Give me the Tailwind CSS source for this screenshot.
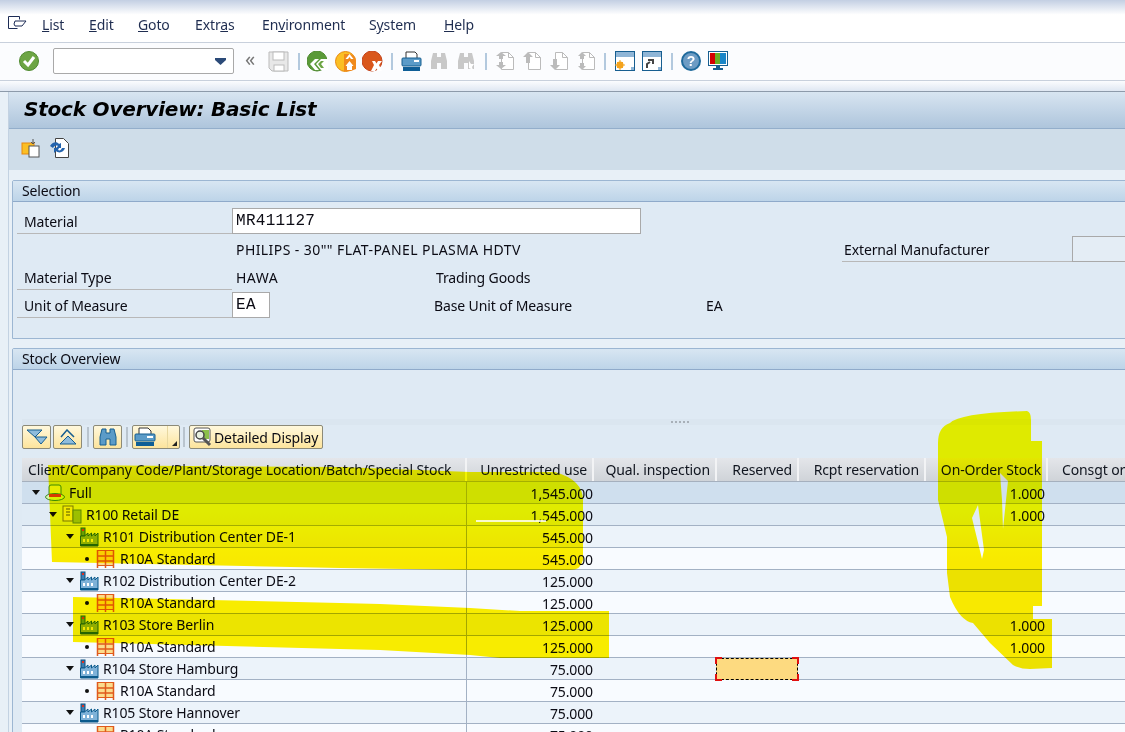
<!DOCTYPE html>
<html lang="en">
<head>
    <meta charset="UTF-8">
    <title>Stock Overview: Basic List</title>
    <script src="https://cdn.jsdelivr.net/npm/@tailwindcss/browser@4"></script>
</head>
<body class="bg-white">
<svg class="hidden">
    <symbol id="plant-blue" viewBox="0 0 20 20">
        <rect x="2" y="1" width="4" height="8" fill="#3d7fb0" stroke="#0b4f7f"/>
        <rect x="3" y="2" width="2" height="2" fill="#e03020"/>
        <path d="M1.5 19V9h4l3.500-3v3l3.500-3v3l3.500-3v3l3-3v13z" fill="#7fb2d8" stroke="#0b5a8c"/>
        <path d="M4 12h2v3H4zM8 12h2v3H8zM12 12h2v3h-2z" fill="#fff"/>
        <rect x="1" y="17" width="18" height="2" fill="#0b5a8c"/>
    </symbol>
    <symbol id="plant-green" viewBox="0 0 20 20">
        <rect x="2" y="1" width="4" height="8" fill="#6aa520" stroke="#2a6a10"/>
        <rect x="3" y="2" width="2" height="2" fill="#e03020"/>
        <path d="M1.5 19V9h4l3.500-3v3l3.500-3v3l3.500-3v3l3-3v13z" fill="#90b820" stroke="#256a10"/>
        <path d="M4 12h2v3H4zM8 12h2v3H8zM12 12h2v3h-2z" fill="#f4f4c0"/>
        <rect x="1" y="17" width="18" height="2" fill="#256a10"/>
    </symbol>
    <symbol id="shelf" viewBox="0 0 20 20">
        <rect x="1.500" y="1.500" width="16" height="15" fill="#fbdc8c" stroke="#e05a1c"/>
        <path d="M1.500 7h16M1.500 12h16M9.500 1.500V19M1.500 1v18M17.500 1v18" fill="none" stroke="#e05a1c" stroke-width="1.500"/>
    </symbol>
    <symbol id="tri-down" viewBox="0 0 8 5"><path d="M0 0h8L4 5z" fill="#111"/></symbol>
    <symbol id="binoc" viewBox="0 0 20 20">
        <path d="M4 2h4v4h4V2h4l2 8v8h-6v-6H8v6H2v-8z" fill="currentColor"/>
    </symbol>
    <symbol id="page" viewBox="0 0 20 20">
        <path d="M6.500 1.500h7l5 5v12h-12z" fill="#fff" stroke="#bbb"/>
        <path d="M13.500 1.500v5h5" fill="none" stroke="#bbb"/>
    </symbol>
</svg>

<div class="relative w-[1125px] h-[732px] overflow-hidden text-[14px] tracking-[-.12px] text-[#0b0b14] [font-family:'Noto_Sans',sans-serif] bg-[#e8f0f7]">

    <!-- menu bar -->
    <div class="h-[43px] flex items-end pb-[7px] pl-[8px] border-b border-[#c8d0dc] bg-linear-to-b from-[#c3cfe3] via-white via-35% to-white text-[#1f2d50]">
        <svg class="w-[19px] h-[14px] mb-[5px] mr-[15px]" viewBox="0 0 19 14" fill="none" stroke="#1c2b55"><path d="M.5.5h11v3M.5.5v12h9M18 5H7l-1 3 1 2h7z"/></svg>
        <span class="w-[47px]"><u>L</u>ist</span>
        <span class="w-[49px]"><u>E</u>dit</span>
        <span class="w-[57px]"><u>G</u>oto</span>
        <span class="w-[67px]">Extr<u>a</u>s</span>
        <span class="w-[107px]">En<u>v</u>ironment</span>
        <span class="w-[75px]">S<u>y</u>stem</span>
        <span><u>H</u>elp</span>
    </div>

    <!-- system toolbar -->
    <div class="h-[38px] pb-[1px] flex items-center pl-[19px] bg-[#fbfcfe] border-b border-[#c8d0dc]">
        <svg class="w-[20px] h-[20px]" viewBox="0 0 20 20"><circle cx="10" cy="10" r="9.500" fill="#6da544" stroke="#4f8a30"/><path d="M5 10l4 4 6-8" fill="none" stroke="#fff" stroke-width="3"/></svg>
        <div class="ml-[14px] w-[181px] h-[26px] bg-white border border-[#a9a9a9] rounded-[2px] flex items-center justify-end pr-[7px]">
            <svg class="w-[11px] h-[7px]" viewBox="0 0 11 7"><path d="M0 0h11v2L5.500 7 0 2z" fill="#2b4a78"/></svg>
        </div>
        <span class="ml-[11px] w-[12px] text-[20px] leading-none text-[#777] -mt-[5px]">«</span>
        <svg class="ml-[11px] w-[21px] h-[21px]" viewBox="0 0 21 21"><path d="M1 1h19v19H4l-3-3z" fill="#e8e8e8" stroke="#bbb"/><rect x="5" y="1" width="11" height="8" fill="#fff" stroke="#bbb"/><rect x="6" y="14" width="10" height="6" fill="#fff" stroke="#bbb"/></svg>
        <div class="ml-[9px] w-[2px] h-[17px] bg-[#b3c9de]"></div>
        <svg class="ml-[7px] w-[21px] h-[21px]" viewBox="0 0 21 21"><circle cx="10" cy="10" r="10" fill="#5a9a38" stroke="#4f8a30"/><path d="M8 8l-5 5 5 6h4l-5-6 5-5zM14 8l-5 5 5 6h7v-11z" fill="#fff"/><path d="M14 10l-3 3 3 4h3l-3-4 3-3z" fill="#6da544"/></svg>
        <svg class="ml-[7px] w-[21px] h-[21px]" viewBox="0 0 21 21"><circle cx="10.500" cy="10.500" r="10" fill="#fbbf24" stroke="#e8870c"/><path d="M9 3h5q7 1 7 7v8l-5 2H9z" fill="#f08a1c"/><path d="M14.500 3l-4 5h2.500l1.500-2 1.500 2h2.500zM14.500 10l-4 5h8z" fill="#fff"/><rect x="12" y="15" width="5" height="4" fill="#fff"/></svg>
        <svg class="ml-[6px] w-[21px] h-[21px]" viewBox="0 0 21 21"><circle cx="10" cy="10" r="10" fill="#d9571c" stroke="#c4431a"/><path d="M10 10h3l1.500 2.500L16 10h4l-3 4 3 6h-4l-1.500-2.500L13 20H9l3-6z" fill="#fff"/></svg>
        <div class="ml-[8px] w-[2px] h-[17px] bg-[#b3c9de]"></div>
        <svg class="ml-[8px] w-[21px] h-[21px]" viewBox="0 0 21 21"><path d="M5 7V1h9l2 2v4" fill="#fff" stroke="#333"/><rect x="1" y="7" width="19" height="8" rx="1" fill="#5b9bc8" stroke="#175e90"/><rect x="13" y="9" width="5" height="2" fill="#fff"/><rect x="2" y="16" width="17" height="4" fill="#0f5e96"/></svg>
        <svg class="ml-[7px] w-[20px] h-[20px] text-[#c8c8c8]"><use href="#binoc"/></svg>
        <svg class="ml-[7px] w-[20px] h-[20px] text-[#c8c8c8]" viewBox="0 0 20 20"><use href="#binoc"/><path d="M13 10l2 3 3 0-2 3 1 3-4-2z" fill="#fff"/></svg>
        <div class="ml-[9px] w-[2px] h-[17px] bg-[#b3c9de]"></div>
        <svg class="ml-[8px] w-[20px] h-[20px]" viewBox="0 0 20 20"><use href="#page"/><path d="M6 1L1 5h3v3h4V5h3zM6 18l5-4H8v-3H4v3H1z" fill="#bbb"/></svg>
        <svg class="ml-[7px] w-[20px] h-[20px]" viewBox="0 0 20 20"><use href="#page"/><path d="M6 1L1 6h3v6h4V6h3z" fill="#bbb"/></svg>
        <svg class="ml-[7px] w-[20px] h-[20px]" viewBox="0 0 20 20"><use href="#page"/><path d="M6 19l-5-5h3V8h4v6h3z" fill="#bbb"/></svg>
        <svg class="ml-[7px] w-[20px] h-[20px]" viewBox="0 0 20 20"><use href="#page"/><path d="M6 1L2 5h2v3h4V5h2zM6 19l-4-4h2v-3h4v3h2z" fill="#bbb"/></svg>
        <div class="ml-[8px] w-[2px] h-[17px] bg-[#b3c9de]"></div>
        <svg class="ml-[9px] w-[20px] h-[20px]" viewBox="0 0 20 20"><rect x=".5" y=".5" width="19" height="19" fill="#fff" stroke="#175e90"/><rect x="1" y="1" width="18" height="5" fill="#8fb5d6"/><circle cx="5" cy="14" r="3.500" fill="#f4a31c"/><path d="M5 9v10M0 14h10M2 11l6 6M8 11l-6 6" stroke="#f4a31c"/><rect x="16" y="16" width="3" height="3" fill="#8fb5d6"/></svg>
        <svg class="ml-[7px] w-[20px] h-[20px]" viewBox="0 0 20 20"><rect x=".5" y=".5" width="19" height="19" fill="#fff" stroke="#175e90"/><rect x="1" y="1" width="18" height="5" fill="#8fb5d6"/><path d="M5 17v-4l3-2M6 9h5v4" fill="none" stroke="#444" stroke-width="2"/><rect x="16" y="16" width="3" height="3" fill="#8fb5d6"/></svg>
        <div class="ml-[9px] w-[2px] h-[17px] bg-[#b3c9de]"></div>
        <svg class="ml-[8px] w-[20px] h-[20px]" viewBox="0 0 20 20"><circle cx="10" cy="10" r="9" fill="#6d9cc4" stroke="#1f6a9c" stroke-width="2"/><text x="10" y="15" text-anchor="middle" font-size="14" font-weight="700" font-family="Liberation Sans" fill="#fff">?</text></svg>
        <svg class="ml-[7px] w-[20px] h-[20px]" viewBox="0 0 20 20"><rect x=".5" y=".5" width="19" height="14" fill="#fff" stroke="#175e90"/><rect x="2" y="2" width="5" height="11" fill="#d40000"/><rect x="7" y="2" width="5" height="11" fill="#6ab023"/><rect x="12" y="2" width="6" height="11" fill="#1a86c8"/><path d="M8 15h4v2h3v2H5v-2h3z" fill="#175e90"/></svg>
    </div>

    <div class="h-[11px] bg-linear-to-b from-[#fbfcfe] to-[#dfe7f2] border-b border-[#8d9aaa]"></div>

    <!-- left strip + application area -->
    <div class="ml-[8px] border-l border-[#c3d2e2]">
        <div class="h-[37px] pl-[15px] pb-[3px] flex items-center border-b border-[#93aecb] bg-linear-to-b from-[#d8e5f1] to-[#aec5dc]">
            <h1 class="text-[20px] font-bold italic text-black [font-family:'DejaVu_Sans',sans-serif] tracking-[-.2px]">Stock Overview: Basic List</h1>
        </div>
        <div class="h-[41px] pl-[12px] flex items-center gap-[8px] bg-[#cfdde9]">
            <svg class="w-[20px] h-[20px] -mt-[3px]" viewBox="0 0 20 20"><rect x="1" y="5" width="12" height="11" fill="#fbbf24" stroke="#e8870c"/><rect x="8" y="8" width="10" height="11" fill="#fff" stroke="#555"/><path d="M12 1v5M10 4l2 2 2-2" fill="none" stroke="#555"/></svg>
            <svg class="w-[20px] h-[20px] -mt-[3px]" viewBox="0 0 20 20"><path d="M6.500.5h8l5 5v14h-13z" fill="#fff" stroke="#444"/><path d="M1 8c2-4 7-5 9-2l2-1v5H7l2-2c-2-1-4 0-5 2zM16 10c-1 4-6 6-9 3l-2 2v-5h5l-1 2c2 1 3 0 4-2z" fill="#2363ad"/></svg>
        </div>

        <div class="pt-[10px] pl-[3px]">
            <!-- selection panel -->
            <section class="h-[159px] w-[1200px] border border-[#9cb6d2] bg-[#dfeaf4] rounded-tl-[2px]">
                <div class="h-[21px] leading-[19px] pl-[9px] border-b border-[#8faaca] bg-linear-to-b from-[#d8e6f2] to-[#bdd4e8]">Selection</div>
                <div class="pl-[4px]">
                    <div class="h-[28px] pt-[6px] flex">
                        <label class="w-[215px] h-[26px] pl-[7px] leading-[27px] border-b border-[#b8b8b8]">Material</label>
                        <div class="w-[409px] h-[26px] bg-white border border-[#a9a9a9] pl-[3px] leading-[24px] text-[16px] tracking-[.3px] [font-family:'Liberation_Mono',monospace]">MR411127</div>
                    </div>
                    <div class="h-[28px] mt-[6px] flex">
                        <span class="w-[219px]"></span>
                        <span class="w-[606px] leading-[27px] tracking-[.42px]">PHILIPS - 30"" FLAT-PANEL PLASMA HDTV</span>
                        <span class="w-[230px] h-[26px] pl-[2px] leading-[27px] border-b border-[#b8b8b8]">External Manufacturer</span>
                        <div class="w-[80px] h-[26px] bg-[#e4edf5] border border-[#a9a9a9]"></div>
                    </div>
                    <div class="h-[28px] flex">
                        <label class="w-[215px] h-[26px] pl-[7px] leading-[27px] border-b border-[#b8b8b8]">Material Type</label>
                        <span class="w-[204px] pl-[4px] leading-[27px] tracking-[.5px]">HAWA</span>
                        <span class="leading-[27px]">Trading Goods</span>
                    </div>
                    <div class="h-[28px] flex">
                        <label class="w-[215px] h-[26px] pl-[7px] leading-[27px] border-b border-[#b8b8b8]">Unit of Measure</label>
                        <div class="w-[38px] h-[26px] bg-white border border-[#a9a9a9] pl-[3px] leading-[24px] text-[16px] tracking-[.3px] [font-family:'Liberation_Mono',monospace]">EA</div>
                        <span class="ml-[164px] w-[272px] leading-[27px]">Base Unit of Measure</span>
                        <span class="leading-[27px]">EA</span>
                    </div>
                </div>
            </section>

            <!-- stock overview panel -->
            <section class="mt-[9px] w-[1200px] h-[400px] border border-[#9cb6d2] bg-[#dfeaf4] rounded-tl-[2px]">
                <div class="h-[21px] leading-[19px] pl-[9px] border-b border-[#8faaca] bg-linear-to-b from-[#d8e6f2] to-[#bdd4e8]">Stock Overview</div>

                <div class="mt-[49px] ml-[9px] h-[6px] bg-[#dbe6f0] flex justify-center">
                    <span class="ml-[126px] mt-[2px] w-[18px] h-[2px] border-t-2 border-dotted border-[#a8b0b8]"></span>
                </div>

                <!-- tree toolbar -->
                <div class="ml-[9px] h-[24px] flex items-center">
                    <button class="w-[29px] h-[24px] rounded-[2px] border border-[#8c8a78] bg-linear-to-b from-[#fff8dc] to-[#fde49c] flex items-center justify-center">
                        <svg class="w-[22px] h-[16px]" viewBox="0 0 22 16"><path d="M1 1h15l-7 7z" fill="#8fbcdc" stroke="#175e90"/><path d="M9 8h12l-6 7z" fill="#8fbcdc" stroke="#175e90"/></svg>
                    </button>
                    <button class="ml-[2px] w-[29px] h-[24px] rounded-[2px] border border-[#8c8a78] bg-linear-to-b from-[#fff8dc] to-[#fde49c] flex items-center justify-center">
                        <svg class="w-[22px] h-[16px]" viewBox="0 0 22 16"><path d="M4 8l6-7 7 7" fill="none" stroke="#175e90" stroke-width="1.500"/><path d="M3 15l8-8 8 8z" fill="#8fbcdc" stroke="#175e90"/></svg>
                    </button>
                    <div class="ml-[5px] w-[2px] h-[20px] bg-[#b9c4ce]"></div>
                    <button class="ml-[4px] w-[29px] h-[24px] rounded-[2px] border border-[#8c8a78] bg-linear-to-b from-[#fff8dc] to-[#fde49c] flex items-center justify-center text-[#5b9bc8]">
                        <svg class="w-[20px] h-[20px]" stroke="#175e90"><use href="#binoc"/></svg>
                    </button>
                    <div class="ml-[4px] w-[2px] h-[20px] bg-[#b9c4ce]"></div>
                    <button class="ml-[4px] w-[48px] h-[24px] rounded-[2px] border border-[#8c8a78] bg-linear-to-b from-[#fff8dc] to-[#fde49c] flex">
                        <span class="w-[35px] h-full flex items-center pl-[1px] border-r border-[#e8d8a0]">
                            <svg class="w-[22px] h-[20px]" viewBox="0 0 22 20"><path d="M5 7V1h9l3 3v3" fill="#fff" stroke="#333"/><rect x="1" y="7" width="20" height="7" rx="1" fill="#5b9bc8" stroke="#175e90"/><rect x="13" y="9" width="6" height="2" fill="#fff"/><rect x="2" y="15" width="18" height="4" fill="#0f5e96"/></svg>
                        </span>
                        <svg class="ml-[4px] mt-[15px] w-[5px] h-[5px]" viewBox="0 0 5 5"><path d="M5 0v5H0z" fill="#222"/></svg>
                    </button>
                    <div class="ml-[3px] w-[2px] h-[20px] bg-[#b9c4ce]"></div>
                    <button class="ml-[4px] w-[134px] h-[24px] rounded-[2px] border border-[#8c8a78] bg-linear-to-b from-[#fff8dc] to-[#fde49c] flex items-center pl-[3px] gap-[1px]">
                        <svg class="w-[20px] h-[20px]" viewBox="0 0 20 20"><rect x="1" y="1" width="16" height="14" rx="2" fill="#fff" stroke="#555"/><rect x="9" y="3" width="7" height="9" fill="#8cc04a"/><circle cx="7" cy="8" r="4" fill="#e8f0e0" stroke="#444" stroke-width="1.500"/><path d="M10 11l7 7" stroke="#555" stroke-width="3"/></svg>
                        <span>Detailed Display</span>
                    </button>
                </div>

                <!-- table -->
                <div class="mt-[9px] ml-[9px]">
                    <div class="h-[24px] flex leading-[24px] text-[#10151f] bg-linear-to-b from-[#e4e6ea] to-[#cfd3d8] border-b border-[#a5b0be]">
                        <div class="w-[445px] pl-[6px] border-r-2 border-[#f2f3f5]">Client/Company Code/Plant/Storage Location/Batch/Special Stock</div>
                        <div class="w-[127px] pr-[5px] text-right border-r-2 border-[#f2f3f5]">Unrestricted use</div>
                        <div class="w-[123px] pr-[5px] text-right border-r-2 border-[#f2f3f5]">Qual. inspection</div>
                        <div class="w-[82px] pr-[5px] text-right border-r-2 border-[#f2f3f5]">Reserved</div>
                        <div class="w-[127px] pr-[5px] text-right border-r-2 border-[#f2f3f5]">Rcpt reservation</div>
                        <div class="w-[122px] pr-[5px] text-right border-r-2 border-[#f2f3f5]">On-Order Stock</div>
                        <div class="pl-[14px]">Consgt ordr</div>
                    </div>

                    <div class="h-[22px] flex leading-[23px] border-b border-[#a3b1c4] bg-[#cfdfee]">
                        <div class="w-[445px] pl-[10px] flex items-center border-r border-[#a3b1c4]"><svg class="w-[8px] h-[5px]"><use href="#tri-down"/></svg><svg class="ml-[5px] mr-[4px] w-[20px] h-[18px]" viewBox="0 0 20 18"><path d="M4 11V3q0-2 2-2h8q2 0 2 2v8" fill="#e6eb8c" stroke="#3c8a28"/><ellipse cx="10" cy="13" rx="9.500" ry="3.500" fill="#d8f0b0" stroke="#3c8a28"/><path d="M4 10h12v3H4z" fill="#d83a20"/></svg><span>Full</span></div>
                        <div class="w-[127px] pr-[1px] text-right">1,545.000</div>
                        <div class="w-[330px]"></div>
                        <div class="w-[122px] pr-[1px] text-right">1.000</div>
                    </div>
                    <div class="h-[22px] flex leading-[23px] border-b border-[#a3b1c4] bg-[#e0ebf5]">
                        <div class="w-[445px] pl-[27px] flex items-center border-r border-[#a3b1c4]"><svg class="w-[8px] h-[5px]"><use href="#tri-down"/></svg><svg class="ml-[5px] mr-[4px] w-[20px] h-[20px]" viewBox="0 0 20 20"><rect x="1" y="1" width="10" height="15" fill="#f2e8a0" stroke="#7a7a20"/><path d="M4 4h4M4 7h4M4 10h4" stroke="#555"/><rect x="11" y="5" width="8" height="13" fill="#9cc03a" stroke="#5f8a20"/></svg><span>R100 Retail DE</span></div>
                        <div class="w-[127px] pr-[1px] text-right">1,545.000</div>
                        <div class="w-[330px]"></div>
                        <div class="w-[122px] pr-[1px] text-right">1.000</div>
                    </div>
                    <div class="h-[22px] flex leading-[23px] border-b border-[#a3b1c4] bg-[#ecf3fa]">
                        <div class="w-[445px] pl-[44px] flex items-center border-r border-[#a3b1c4]"><svg class="w-[8px] h-[5px]"><use href="#tri-down"/></svg><svg class="ml-[5px] mr-[4px] w-[20px] h-[20px]"><use href="#plant-green"/></svg><span>R101 Distribution Center DE-1</span></div>
                        <div class="w-[127px] pr-[1px] text-right">545.000</div>
                    </div>
                    <div class="h-[22px] flex leading-[23px] border-b border-[#a3b1c4] bg-[#f8fbff]">
                        <div class="w-[445px] pl-[63px] flex items-center border-r border-[#a3b1c4]"><span class="w-[4px] h-[4px] rounded-full bg-[#111]"></span><svg class="ml-[7px] mr-[4px] w-[20px] h-[20px]"><use href="#shelf"/></svg><span>R10A Standard</span></div>
                        <div class="w-[127px] pr-[1px] text-right">545.000</div>
                    </div>
                    <div class="h-[22px] flex leading-[23px] border-b border-[#a3b1c4] bg-[#ecf3fa]">
                        <div class="w-[445px] pl-[44px] flex items-center border-r border-[#a3b1c4]"><svg class="w-[8px] h-[5px]"><use href="#tri-down"/></svg><svg class="ml-[5px] mr-[4px] w-[20px] h-[20px]"><use href="#plant-blue"/></svg><span>R102 Distribution Center DE-2</span></div>
                        <div class="w-[127px] pr-[1px] text-right">125.000</div>
                    </div>
                    <div class="h-[22px] flex leading-[23px] border-b border-[#a3b1c4] bg-[#f8fbff]">
                        <div class="w-[445px] pl-[63px] flex items-center border-r border-[#a3b1c4]"><span class="w-[4px] h-[4px] rounded-full bg-[#111]"></span><svg class="ml-[7px] mr-[4px] w-[20px] h-[20px]"><use href="#shelf"/></svg><span>R10A Standard</span></div>
                        <div class="w-[127px] pr-[1px] text-right">125.000</div>
                    </div>
                    <div class="h-[22px] flex leading-[23px] border-b border-[#a3b1c4] bg-[#ecf3fa]">
                        <div class="w-[445px] pl-[44px] flex items-center border-r border-[#a3b1c4]"><svg class="w-[8px] h-[5px]"><use href="#tri-down"/></svg><svg class="ml-[5px] mr-[4px] w-[20px] h-[20px]"><use href="#plant-green"/></svg><span>R103 Store Berlin</span></div>
                        <div class="w-[127px] pr-[1px] text-right">125.000</div>
                        <div class="w-[330px]"></div>
                        <div class="w-[122px] pr-[1px] text-right">1.000</div>
                    </div>
                    <div class="h-[22px] flex leading-[23px] border-b border-[#a3b1c4] bg-[#f8fbff]">
                        <div class="w-[445px] pl-[63px] flex items-center border-r border-[#a3b1c4]"><span class="w-[4px] h-[4px] rounded-full bg-[#111]"></span><svg class="ml-[7px] mr-[4px] w-[20px] h-[20px]"><use href="#shelf"/></svg><span>R10A Standard</span></div>
                        <div class="w-[127px] pr-[1px] text-right">125.000</div>
                        <div class="w-[330px]"></div>
                        <div class="w-[122px] pr-[1px] text-right">1.000</div>
                    </div>
                    <div class="h-[22px] flex leading-[23px] border-b border-[#a3b1c4] bg-[#ecf3fa]">
                        <div class="w-[445px] pl-[44px] flex items-center border-r border-[#a3b1c4]"><svg class="w-[8px] h-[5px]"><use href="#tri-down"/></svg><svg class="ml-[5px] mr-[4px] w-[20px] h-[20px]"><use href="#plant-blue"/></svg><span>R104 Store Hamburg</span></div>
                        <div class="w-[127px] pr-[1px] text-right">75.000</div>
                        <div class="relative ml-[122px] w-[82px] h-[22px] bg-[#fdda80] border border-dashed border-black">
                            <span class="absolute -left-[2px] -top-[2px] w-[7px] h-[7px] border-l-2 border-t-2 border-[#e01010]"></span>
                            <span class="absolute -right-[2px] -top-[2px] w-[7px] h-[7px] border-r-2 border-t-2 border-[#e01010]"></span>
                            <span class="absolute -left-[2px] -bottom-[2px] w-[7px] h-[7px] border-l-2 border-b-2 border-[#e01010]"></span>
                            <span class="absolute -right-[2px] -bottom-[2px] w-[7px] h-[7px] border-r-2 border-b-2 border-[#e01010]"></span>
                        </div>
                    </div>
                    <div class="h-[22px] flex leading-[23px] border-b border-[#a3b1c4] bg-[#f8fbff]">
                        <div class="w-[445px] pl-[63px] flex items-center border-r border-[#a3b1c4]"><span class="w-[4px] h-[4px] rounded-full bg-[#111]"></span><svg class="ml-[7px] mr-[4px] w-[20px] h-[20px]"><use href="#shelf"/></svg><span>R10A Standard</span></div>
                        <div class="w-[127px] pr-[1px] text-right">75.000</div>
                    </div>
                    <div class="h-[22px] flex leading-[23px] border-b border-[#a3b1c4] bg-[#ecf3fa]">
                        <div class="w-[445px] pl-[44px] flex items-center border-r border-[#a3b1c4]"><svg class="w-[8px] h-[5px]"><use href="#tri-down"/></svg><svg class="ml-[5px] mr-[4px] w-[20px] h-[20px]"><use href="#plant-blue"/></svg><span>R105 Store Hannover</span></div>
                        <div class="w-[127px] pr-[1px] text-right">75.000</div>
                    </div>
                    <div class="h-[22px] flex leading-[23px] border-b border-[#a3b1c4] bg-[#f8fbff]">
                        <div class="w-[445px] pl-[63px] flex items-center border-r border-[#a3b1c4]"><span class="w-[4px] h-[4px] rounded-full bg-[#111]"></span><svg class="ml-[7px] mr-[4px] w-[20px] h-[20px]"><use href="#shelf"/></svg><span>R10A Standard</span></div>
                        <div class="w-[127px] pr-[1px] text-right">75.000</div>
                    </div>
                </div>
            </section>
        </div>
    </div>

    <!-- yellow marker strokes drawn over the screenshot -->
    <svg class="absolute left-0 top-0 w-[1125px] h-[732px] mix-blend-multiply pointer-events-none" viewBox="0 0 1125 732">
        <defs>
            <linearGradient id="marker" gradientUnits="userSpaceOnUse" x1="0" y1="400" x2="0" y2="680">
                <stop offset="0.4" stop-color="#ffff00"/>
                <stop offset="0.49" stop-color="#fff400"/>
                <stop offset="0.58" stop-color="#ffed00"/>
            </linearGradient>
        </defs>
        <path fill="url(#marker)" d="M48 465 L340 467 L470 472 L555 472 Q583 480 583 500 L583 560 Q581 570 570 570 L470 570 L340 568 L52 562 Z"/>
        <path fill="#fff000" d="M73 597 L340 603 L380 604 L470 608 L520 611 L609 611 L609 658 L500 658 L470 655 L380 650 L340 649 L73 642 Z"/>
        <path fill="url(#marker)" fill-rule="evenodd" d="M1027 411 Q1031 412 1031 420 L1031 441 L1042 441 L1042 606 L1033 606 L1033 619 L1052 619 L1052 668 L1030 669 Q1020 669 1013 665 L990 643 L973 623 Q960 621 950 597 L947 573 L947 537 L938 500 L938 443 Q938 427 950 423 Q960 413 1027 411 Z M1000 473 L1008 481 L1003 529 L1002 500 Z M978 505 L972 518 L982 559 L984 550 Z"/>
    </svg>
    <div class="absolute left-[476px] top-[520px] w-[70px] h-[2px] bg-white/80"></div>
</div>
</body>
</html>
